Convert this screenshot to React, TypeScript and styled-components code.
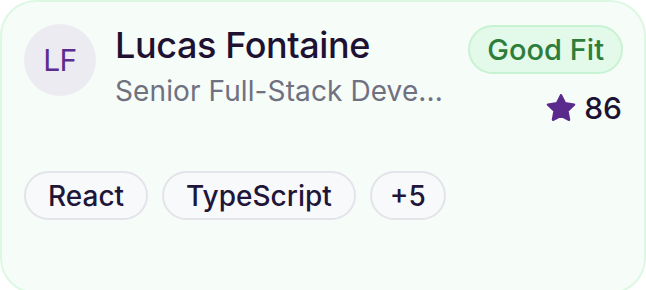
import styled, { createGlobalStyle } from "styled-components";

const GlobalStyle = createGlobalStyle`
  html, body {
    margin: 0;
    padding: 0;
    background: #ffffff;
    overflow: hidden;
  }
  body {
    font-family: Inter, "Noto Sans", sans-serif;
  }
`;

const Card = styled.div`
  box-sizing: border-box;
  width: 646px;
  height: 294px;
  padding: 24px;
  border: 2px solid #dcf8e3;
  border-radius: 36px;
  background: #f6fcf8;
  display: flex;
  flex-direction: column;
  gap: 45px;
`;

const Header = styled.div`
  display: flex;
  align-items: flex-start;
  gap: 19px;
`;

const Avatar = styled.div`
  flex: 0 0 72px;
  height: 72px;
  margin: -2px 0 0 -2px;
  border-radius: 50%;
  background: #ecebf1;
  color: #5b2d8e;
  display: flex;
  align-items: center;
  justify-content: center;
  font-size: 30px;
  letter-spacing: -0.5px;
`;

const Info = styled.div`
  flex: 1;
  min-width: 0;
  display: flex;
  flex-direction: column;
  gap: 8px;
  margin-top: -2px;
`;

const Name = styled.div`
  font-size: 36px;
  line-height: 1.2;
  font-weight: 500;
  color: #1e1233;
  letter-spacing: -0.4px;
`;

const Role = styled.div`
  font-size: 28px;
  line-height: 1.2;
  color: #6f7080;
  white-space: nowrap;
  letter-spacing: 0.1px;
`;

const Side = styled.div`
  display: flex;
  flex-direction: column;
  align-items: flex-end;
  gap: 16px;
  margin-right: -3px;
  margin-top: -1px;
`;

const FitBadge = styled.div`
  box-sizing: border-box;
  height: 49px;
  padding: 0 17px;
  border: 2px solid #c8f3d2;
  border-radius: 999px;
  background: #e3f9e9;
  color: #2e7d3b;
  font-size: 29px;
  font-weight: 500;
  display: flex;
  align-items: center;
`;

const Score = styled.div`
  display: flex;
  align-items: center;
  gap: 8px;
  font-size: 30px;
  line-height: 1.2;
  color: #1e1233;
  font-weight: 500;
  margin-right: 1px;
`;

const Tags = styled.div`
  display: flex;
  gap: 14px;
  margin-left: -2px;
`;

const Tag = styled.div<{ $compact?: boolean }>`
  box-sizing: border-box;
  height: 49px;
  padding: 0 ${(p) => (p.$compact ? "18px" : "22px")};
  border: 2px solid #e3e4ea;
  border-radius: 999px;
  background: #f8f9fb;
  color: #20163a;
  font-size: 28px;
  font-weight: 500;
  display: flex;
  align-items: center;
`;

const Star = () => (
  <svg width="30" height="28" viewBox="0 0 24 23">
    <path
      d="M12 1l3.3 6.6 7.4 1.1-5.4 5.2 1.3 7.3L12 17.8l-6.6 3.4 1.3-7.3L1.3 8.7l7.4-1.1z"
      fill="#5a2b8c"
      stroke="#5a2b8c"
      strokeWidth="2"
      strokeLinejoin="round"
    />
  </svg>
);

const skills = ["React", "TypeScript", "+5"];

export default function App() {
  return (
    <>
      <GlobalStyle />
      <Card>
        <Header>
          <Avatar>LF</Avatar>
          <Info>
            <Name>Lucas Fontaine</Name>
            <Role>Senior Full-Stack Deve...</Role>
          </Info>
          <Side>
            <FitBadge>Good Fit</FitBadge>
            <Score>
              <Star />
              86
            </Score>
          </Side>
        </Header>
        <Tags>
          {skills.map((s) => (
            <Tag key={s} $compact={s.startsWith("+")}>
              {s}
            </Tag>
          ))}
        </Tags>
      </Card>
    </>
  );
}
